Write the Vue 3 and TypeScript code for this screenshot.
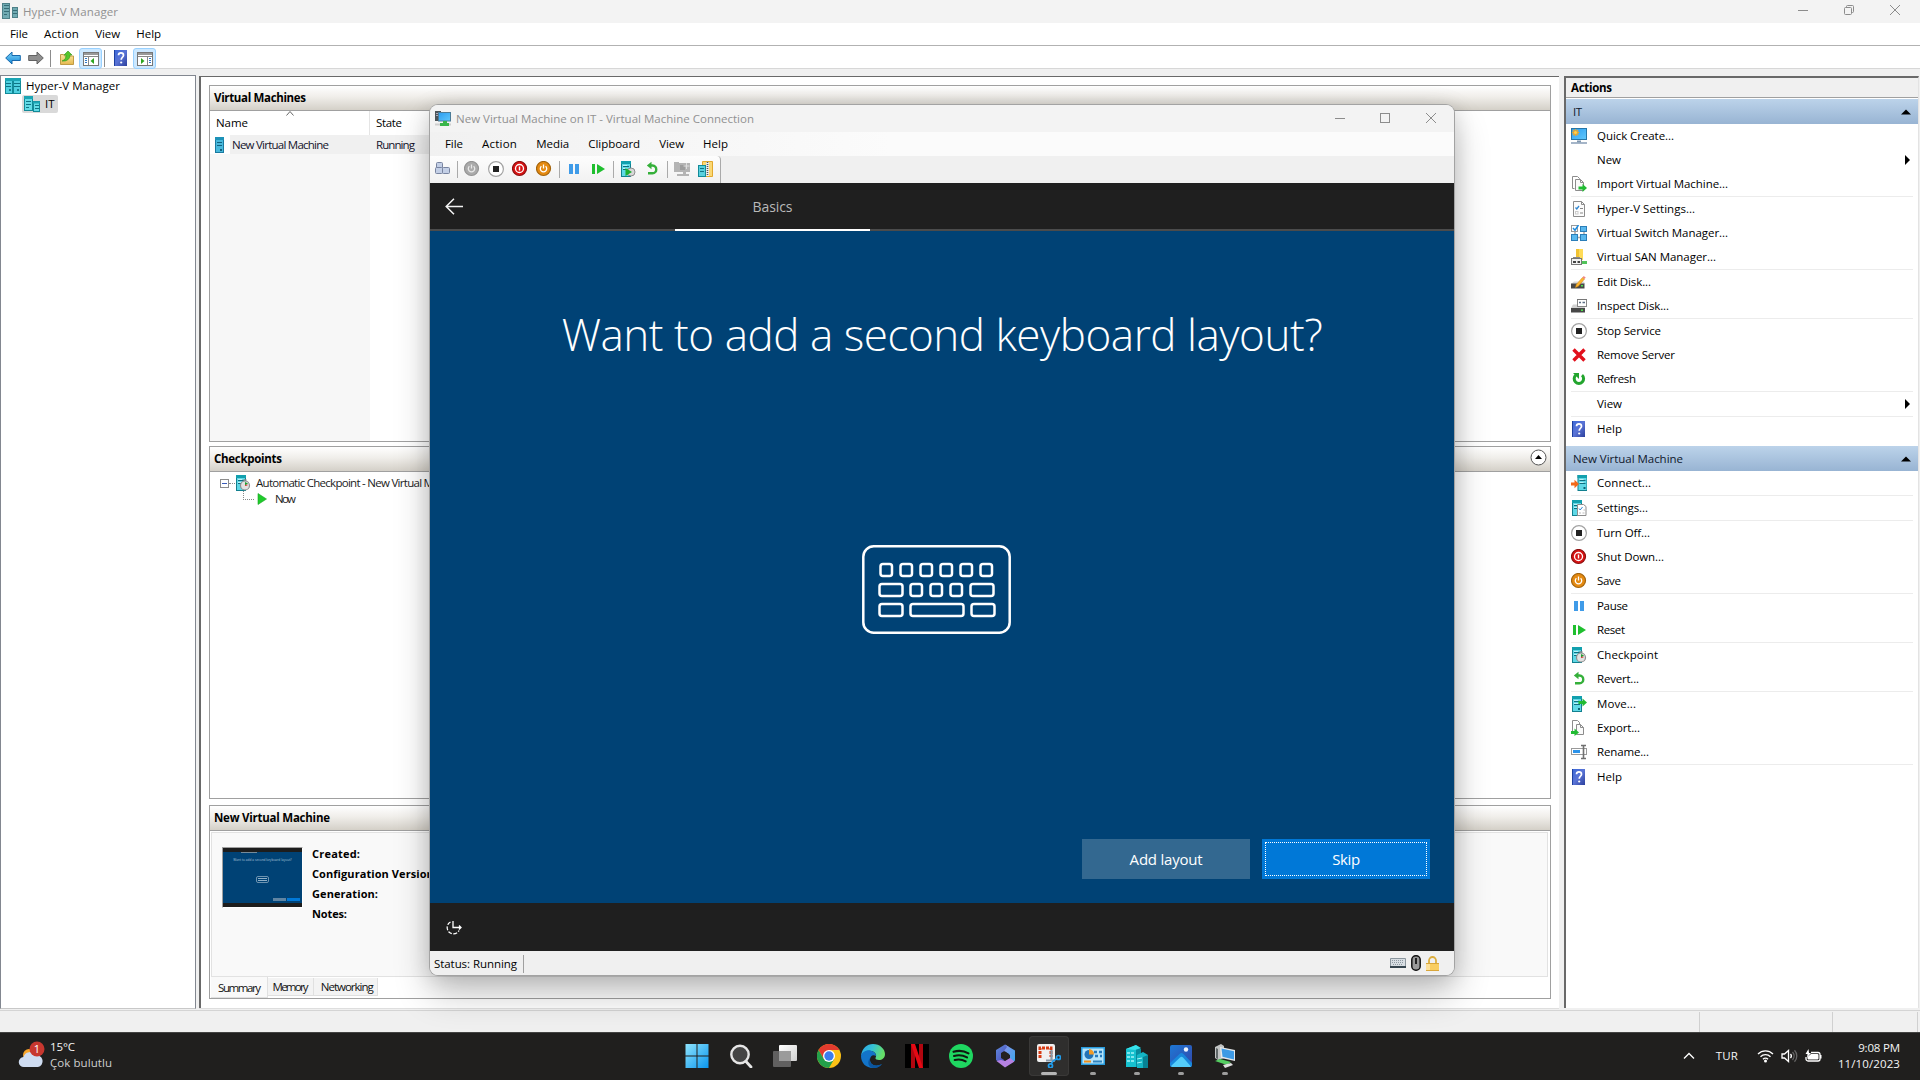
<script setup lang="ts">
import type { Directive } from 'vue'

// Tracks a label out (or in) until it occupies the given advance width in pixels.
const vFit: Directive<HTMLElement, number> = {
  mounted(el, { value }) {
    const count = (el.textContent ?? '').trim().length
    if (!value || count < 2) return
    const width = el.getBoundingClientRect().width
    el.style.letterSpacing = `${((value - width) / (count - 1)).toFixed(3)}px`
  },
}

type Label = [text: string, width: number]
interface Item { icon?: string; text: string; w: number; sub?: boolean }

const managerMenu: Label[] = [['File', 18], ['Action', 35], ['View', 25], ['Help', 25]]
const vmMenu: Label[] = [['File', 18], ['Action', 35], ['Media', 33], ['Clipboard', 52], ['View', 25], ['Help', 25]]

const hostActions: Item[][] = [
  [
    { icon: 'quick', text: 'Quick Create...', w: 77 },
    { text: 'New', w: 24, sub: true },
    { icon: 'import', text: 'Import Virtual Machine...', w: 131 },
  ],
  [
    { icon: 'hvset', text: 'Hyper-V Settings...', w: 98 },
    { icon: 'switch', text: 'Virtual Switch Manager...', w: 131 },
    { icon: 'san', text: 'Virtual SAN Manager...', w: 119 },
  ],
  [
    { icon: 'editdisk', text: 'Edit Disk...', w: 54 },
    { icon: 'inspect', text: 'Inspect Disk...', w: 72 },
  ],
  [
    { icon: 'stop', text: 'Stop Service', w: 64 },
    { icon: 'remove', text: 'Remove Server', w: 78 },
    { icon: 'refresh', text: 'Refresh', w: 39 },
  ],
  [{ text: 'View', w: 25, sub: true }],
  [{ icon: 'help', text: 'Help', w: 25 }],
]
const vmActions: Item[][] = [
  [{ icon: 'connect', text: 'Connect...', w: 54 }],
  [{ icon: 'settings', text: 'Settings...', w: 51 }],
  [
    { icon: 'stop', text: 'Turn Off...', w: 53 },
    { icon: 'shutdown', text: 'Shut Down...', w: 67 },
    { icon: 'save', text: 'Save', w: 24 },
  ],
  [
    { icon: 'pause', text: 'Pause', w: 31 },
    { icon: 'reset', text: 'Reset', w: 28 },
  ],
  [
    { icon: 'checkpoint', text: 'Checkpoint', w: 61 },
    { icon: 'revert', text: 'Revert...', w: 42 },
  ],
  [
    { icon: 'move', text: 'Move...', w: 39 },
    { icon: 'export', text: 'Export...', w: 43 },
    { icon: 'rename', text: 'Rename...', w: 52 },
  ],
  [{ icon: 'help', text: 'Help', w: 25 }],
]
const actionGroups = [
  { title: 'IT', w: 9, groups: hostActions },
  { title: 'New Virtual Machine', w: 110, groups: vmActions },
]

const details: Label[] = [['Created:', 48], ['Configuration Version:', 125], ['Generation:', 66], ['Notes:', 35]]

const vmTools = ['keys', '|', 'power', 'stop', 'shutdown', 'save', '|', 'pause', 'reset', '|', 'snapplay', 'revert', '|', 'enhanced', 'share']

const taskbarApps = [
  { id: 'start' }, { id: 'search' }, { id: 'taskview' }, { id: 'chrome' }, { id: 'edge' },
  { id: 'netflix' }, { id: 'spotify' }, { id: 'm365' }, { id: 'snip', run: true, active: true },
  { id: 'cpanel', run: true }, { id: 'hyperv', run: true }, { id: 'photos', run: true }, { id: 'vmconn', run: true },
]
</script>

<template>
  <svg class="defs" width="0" height="0">
    <defs>
      <linearGradient id="g-blue" x1="0" y1="0" x2="0" y2="1"><stop offset="0" stop-color="#7fd4f7" /><stop offset="1" stop-color="#1689d8" /></linearGradient>
      <linearGradient id="g-win" x1="0" y1="0" x2="1" y2="1"><stop offset="0" stop-color="#8ee3fd" /><stop offset="1" stop-color="#0a96ee" /></linearGradient>
      <linearGradient id="g-scr" x1="0" y1="0" x2="1" y2="1"><stop offset="0" stop-color="#2c9cf0" /><stop offset="1" stop-color="#60c8fb" /></linearGradient>
      <linearGradient id="g-help" x1="0" y1="0" x2="1" y2="1"><stop offset="0" stop-color="#3a68d8" /><stop offset=".5" stop-color="#5a74d6" /><stop offset="1" stop-color="#2c3f9c" /></linearGradient>
      <linearGradient id="g-edge" x1="0" y1="0" x2="1" y2=".3"><stop offset="0" stop-color="#2aa5e8" /><stop offset=".5" stop-color="#35c1d6" /><stop offset="1" stop-color="#66df68" /></linearGradient>
      <linearGradient id="g-m1" x1="0" y1="0" x2="1" y2="1"><stop offset="0" stop-color="#5f8dde" /><stop offset="1" stop-color="#4a3eb4" /></linearGradient>
      <linearGradient id="g-m2" x1="0" y1="0" x2="1" y2="1"><stop offset="0" stop-color="#8d93ea" /><stop offset="1" stop-color="#35a8ee" /></linearGradient>
      <linearGradient id="g-photo" x1="0" y1="0" x2="1" y2="1"><stop offset="0" stop-color="#1d78d6" /><stop offset="1" stop-color="#3446a8" /></linearGradient>
      <linearGradient id="g-tv" x1="0" y1="0" x2="1" y2="1"><stop offset="0" stop-color="#fff" /><stop offset="1" stop-color="#d0d0d0" /></linearGradient>
      <linearGradient id="g-folder" x1="0" y1="0" x2="0" y2="1"><stop offset="0" stop-color="#fbe6a0" /><stop offset="1" stop-color="#e5b84e" /></linearGradient>

      <symbol id="server" viewBox="0 0 16 16">
        <rect x="3.500" y=".5" width="9" height="15" fill="#5fd8e6" stroke="#12808f" />
        <rect x="3" y="0" width="10" height="3" fill="#12a0ae" />
        <path d="M5 5.500h6M5 8.500h6" stroke="#0d6e80" /><path d="M5 4.500h4M5 7.500h4" stroke="#b9f2f8" />
        <rect x="9" y="12" width="2" height="2" fill="#0a6474" />
      </symbol>
      <symbol id="vmrow" viewBox="0 0 16 16">
        <rect x=".5" y=".5" width="8" height="15" fill="#48b9dc" stroke="#1a7aa0" />
        <rect x="0" y="0" width="9" height="3" fill="#1d92b8" />
        <path d="M2 5.500h5M2 8.500h5" stroke="#13617f" /><rect x="5" y="12" width="2" height="2" fill="#13617f" />
      </symbol>
      <symbol id="servers" viewBox="0 0 16 16">
        <rect x=".5" y=".5" width="7" height="15" fill="#4fd0e0" stroke="#128a98" /><rect x="8.500" y=".5" width="7" height="15" fill="#4fd0e0" stroke="#128a98" />
        <path d="M0 1.500h16" stroke="#1ba5b4" stroke-width="3" />
        <path d="M1 5.500h5M1 8.500h5M9 5.500h6M9 8.500h6" stroke="#0f7485" /><path d="M5 11v2M13 11v2" stroke="#0a6474" stroke-width="1.500" />
      </symbol>
      <symbol id="host" viewBox="0 0 16 16">
        <rect x=".5" y=".5" width="8" height="14" fill="#62dbe6" stroke="#128a98" /><path d="M0 1.500h9" stroke="#1ba5b4" stroke-width="3" />
        <path d="M2 5.500h5M2 8.500h5M2 11.500h3" stroke="#0f7485" />
        <rect x="9.500" y="5.500" width="6" height="10" fill="#62dbe6" stroke="#128a98" /><path d="M9 6.500h7" stroke="#1ba5b4" stroke-width="2" /><path d="M11 9.500h4M11 12.500h4" stroke="#0f7485" />
      </symbol>
      <symbol id="apptitle" viewBox="0 0 16 16">
        <rect x=".5" y=".5" width="7" height="15" fill="#70aab2" stroke="#4d8088" /><path d="M2 2.500h5M2 5.500h5M2 8.500h5M2 11.500h3" stroke="#366c76" />
        <rect x="10.500" y="4.500" width="5" height="10" fill="#70aab2" stroke="#4d8088" /><path d="M11 7.500h4M11 10.500h4" stroke="#366c76" />
      </symbol>
      <symbol id="back" viewBox="0 0 16 14"><path d="M.7 7 7 1v3.500h8.300v5H7V13Z" fill="url(#g-blue)" stroke="#1668ac" /></symbol>
      <symbol id="fwd" viewBox="0 0 16 14"><path d="M15.300 7 9 1v3.500H.7v5H9V13Z" fill="#8f8f8f" stroke="#626262" /></symbol>
      <symbol id="folder" viewBox="0 0 16 16">
        <path d="M1.500 14.500v-10h3l1 1.500h9v8.500Z" fill="url(#g-folder)" stroke="#c19b45" />
        <path d="M3 11c3-1 4-3 4-6H5l4-4 4 4h-2c0 4-3 6.500-8 6Z" fill="#55c62c" stroke="#2f9416" stroke-width=".6" />
      </symbol>
      <symbol id="panel-l" viewBox="0 0 16 14">
        <rect x=".5" y=".5" width="15" height="13" fill="#fff" stroke="#777" /><path d="M1 2h14" stroke="#999" stroke-width="2" /><path d="M1 4.500h14M5.500 5v8" stroke="#888" />
        <path d="M2 6.500h2M2 8.500h2M2 10.500h2" stroke="#2f77c8" /><path d="M11 6v6L7.500 9Z" fill="#2ca51f" />
      </symbol>
      <symbol id="panel-r" viewBox="0 0 16 14">
        <rect x=".5" y=".5" width="15" height="13" fill="#fff" stroke="#777" /><path d="M1 2h14" stroke="#999" stroke-width="2" /><path d="M1 4.500h14M10.500 5v8" stroke="#888" />
        <path d="M12 6.500h2M12 8.500h2M12 10.500h2" stroke="#2f77c8" /><path d="M4 6v6l3.500-3Z" fill="#2ca51f" />
      </symbol>
      <symbol id="help" viewBox="0 0 16 16">
        <rect x="1" y="0" width="13" height="16" fill="url(#g-help)" /><path d="M1.500 0v16" stroke="#1d3fa0" />
        <path d="M5.500 5.200c0-3.200 5-3.200 5 0 0 2-2.300 2.200-2.300 4.600" fill="none" stroke="#fff" stroke-width="1.700" /><circle cx="8.200" cy="12.500" r="1.100" fill="#fff" />
      </symbol>
      <symbol id="quick" viewBox="0 0 16 16">
        <rect x=".5" y=".5" width="15" height="11" fill="url(#g-scr)" stroke="#2676a8" /><path d="M6 13.500h4" stroke="#7f96ae" stroke-width="2" /><path d="M0 15h16" stroke="#8fa3bb" stroke-width="1.600" />
        <path d="M4.500 1v7M1 4.500h7M2 2l5 5M7 2 2 7" stroke="#f5a623" stroke-width="1.300" /><circle cx="4.500" cy="4.500" r="1.500" fill="#ffd34d" />
      </symbol>
      <symbol id="import" viewBox="0 0 16 16">
        <path d="M3.500 12.500h-2v-12h5l2 2v2" fill="#fff" stroke="#8c8c8c" /><path d="M4.500 14.500v-11h5l3 3v8Z" fill="#fafafa" stroke="#8c8c8c" /><path d="M9.500 3.500v3h3" fill="none" stroke="#8c8c8c" />
        <path d="M7.500 10.500h4v-2.500l4.500 4-4.500 4v-2.500h-4Z" fill="#22bb33" />
      </symbol>
      <symbol id="export" viewBox="0 0 16 16">
        <path d="M3.500 11.500h-2v-11h5l2 2v2" fill="#fff" stroke="#8c8c8c" /><path d="M5.500 14.500v-10h4l3 3v7Z" fill="#fafafa" stroke="#8c8c8c" /><path d="M9.500 4.500v3h3" fill="none" stroke="#8c8c8c" />
        <path d="M0 11h3.500V8.500l4.500 4-4.500 3.500V14H0Z" fill="#22bb33" />
      </symbol>
      <symbol id="hvset" viewBox="0 0 16 16">
        <path d="M2.500.5h8l3 3v12h-11Z" fill="#fcfcfc" stroke="#8c8c8c" /><path d="M10.500.5v3h3" fill="none" stroke="#8c8c8c" />
        <path d="m4.500 6.500 1.300 1.500L8 5" fill="none" stroke="#2f86d2" stroke-width="1.300" /><path d="M9 7.500h3M9 12h3" stroke="#888" /><rect x="4.500" y="10.500" width="2.500" height="2.500" fill="none" stroke="#ccc" />
      </symbol>
      <symbol id="switch" viewBox="0 0 16 16">
        <path d="M4 7v3M13 6v4M6 12.500h4" stroke="#a8a8a8" stroke-width="1.500" />
        <g fill="#59b8ee" stroke="#2b7eb8"><rect x="9.500" y="1.500" width="6" height="5" /><rect x=".5" y="9.500" width="6" height="6" /><rect x="9.500" y="9.500" width="6" height="6" /></g>
        <rect x=".5" y=".5" width="6" height="6" fill="#fff" stroke="#999" /><path d="m2 3 2 2.200L7.500 0" fill="none" stroke="#1d8be0" stroke-width="1.500" />
      </symbol>
      <symbol id="san" viewBox="0 0 16 16">
        <path d="M5 0h7v11H5Z" fill="#ffdb57" /><path d="M5 0h3v11H5Z" fill="#f1c232" /><path d="M10 12h6v3h-6Z" fill="#51c35a" />
        <rect x=".5" y="9.500" width="10" height="6" fill="#f1f1f1" stroke="#777" /><path d="M2 12h3v2H2ZM6.500 12h2.500v2H6.500Z" fill="#444" /><path d="M2 8.500h7" stroke="#888" />
      </symbol>
      <symbol id="editdisk" viewBox="0 0 16 16">
        <path d="m0 10 3-2.500h10l1 2.500Z" fill="#d8d8d8" /><rect x="0" y="9.500" width="13.500" height="5" fill="#484848" /><rect x="10" y="11" width="2" height="1.500" fill="#4fe04f" />
        <path d="m4.500 13.500.8-3 6.200-7 2 1.500-6.200 7.300Z" fill="#ffb52e" stroke="#c98413" stroke-width=".5" /><path d="m11.500 3.500 1.200-1.500 2 1.600-1.200 1.500Z" fill="#ef8787" />
      </symbol>
      <symbol id="inspect" viewBox="0 0 16 16">
        <path d="m0 10 2-3.500h11l1 3.500Z" fill="#d2d2d2" /><rect x="0" y="10" width="14" height="4.500" fill="#484848" /><rect x="10" y="11.500" width="2" height="1.500" fill="#4fe04f" />
        <rect x="6.500" y="1.500" width="9" height="7" fill="#fff" stroke="#888" /><path d="M6 1.500h10" stroke="#777" /><path d="M8 4.500h2M11.500 4.500h2.500" stroke="#5d6f85" stroke-width="1.500" />
      </symbol>
      <symbol id="stop" viewBox="0 0 16 16"><circle cx="8" cy="8" r="7.400" fill="#fff" stroke="#a3a3a3" stroke-width="1.200" /><rect x="5" y="5" width="6" height="6" fill="#222" /></symbol>
      <symbol id="remove" viewBox="0 0 16 16"><path d="m2.500 2.500 11 11m0-11-11 11" stroke="#e2101c" stroke-width="3.400" /></symbol>
      <symbol id="refresh" viewBox="0 0 16 16"><path d="M11 4.200a4.700 4.700 0 1 1-6.200 0" fill="none" stroke="#23a52e" stroke-width="3" /><path d="M2 2h6v6Z" fill="#23a52e" /></symbol>
      <symbol id="connect" viewBox="0 0 16 16"><use href="#server" x="3.500" width="16" height="16" /><path d="M0 7.500h3.500V4.800L8 9l-4.500 4.200v-2.700H0Z" fill="#f36a1a" /></symbol>
      <symbol id="settings" viewBox="0 0 16 16"><use href="#server" x="-2" width="16" height="16" /><path d="M6.500 4.500h6l2.500 2v9H6.500Z" fill="#fff" stroke="#8c8c8c" /><path d="m8 8.500 1.200 1.500L11.500 7" fill="none" stroke="#2f86d2" /><path d="M8 13h2m1.500 0h2m-1-3h1.500" stroke="#bbb" /></symbol>
      <symbol id="shutdown" viewBox="0 0 16 16"><circle cx="7.500" cy="7.500" r="7" fill="#d81313" stroke="#8d0f0f" stroke-width="1.200" /><circle cx="7.500" cy="7.500" r="4" fill="none" stroke="#fff" stroke-width="1.300" /><path d="M7.500 5.500v4" stroke="#fff" stroke-width="1.400" /></symbol>
      <symbol id="save" viewBox="0 0 16 16"><circle cx="7.500" cy="7.500" r="7" fill="#e58a11" stroke="#a3640e" stroke-width="1.200" /><path d="M5.400 5.300a3.200 3.200 0 1 0 4.200 0M7.500 3.500v4" fill="none" stroke="#fff" stroke-width="1.300" /></symbol>
      <symbol id="power" viewBox="0 0 16 16"><circle cx="7.500" cy="7.500" r="7" fill="#aaa" stroke="#949494" stroke-width="1.200" /><path d="M5.400 5.300a3.200 3.200 0 1 0 4.200 0M7.500 3.500v4" fill="none" stroke="#e8e8e8" stroke-width="1.300" /></symbol>
      <symbol id="pause" viewBox="0 0 16 16"><path d="M3 3h4v10H3zM9 3h4v10H9z" fill="#3f9be8" /></symbol>
      <symbol id="reset" viewBox="0 0 16 16"><path d="M2 3h3v10H2zM7 3v10l8-5z" fill="#1fbf2f" /></symbol>
      <symbol id="checkpoint" viewBox="0 0 16 16"><use href="#server" x="-2" width="16" height="16" /><circle cx="10" cy="10.500" r="4.500" fill="#e2e2e2" stroke="#8e8e8e" stroke-width="1.200" /><path d="M10 10.500V7l3 1.500Z" fill="#20a030" /><path d="m10 10.500 2.500-.5" stroke="#d33" /><path d="M8.500 5h3" stroke="#888" stroke-width="1.500" /></symbol>
      <symbol id="snapplay" viewBox="0 0 16 16"><use href="#server" x="-2" width="16" height="16" /><circle cx="11" cy="11" r="4" fill="#d8d8d8" stroke="#8e8e8e" /><path d="M5.500 7v8l6.500-4Z" fill="#1faf2f" /></symbol>
      <symbol id="revert" viewBox="0 0 16 16"><path d="M6 4.500h2.500c5 0 5 7.800 0 7.800H4" fill="none" stroke="#35b03a" stroke-width="2.400" /><path d="M2.800 4.500 7.500.8v7.400Z" fill="#35b03a" /></symbol>
      <symbol id="move" viewBox="0 0 16 16"><use href="#server" x="-2" width="16" height="16" /><path d="M7.500 5h4V2.500L16 6.500l-4.500 4V8h-4Z" fill="#22bb33" /></symbol>
      <symbol id="rename" viewBox="0 0 16 16"><rect x=".5" y="4.500" width="15" height="6" fill="#fff" stroke="#999" /><rect x="2" y="6" width="7" height="3" fill="#2b93ea" /><path d="M12.500 1v14M10 1.500h5M10 14.500h5" stroke="#707070" stroke-width="1.600" /></symbol>
      <symbol id="play" viewBox="0 0 16 16"><path d="M4 2.500v11l8.500-5.500Z" fill="#1fcb2b" stroke="#17a522" stroke-width=".6" /></symbol>
      <symbol id="keys" viewBox="0 0 16 16"><g fill="#c3cfe6" stroke="#7884a0"><rect x="1.500" y="1.500" width="6" height="6" rx="1" /><rect x=".5" y="6.500" width="7" height="6" rx="1" /><rect x="7.500" y="6.500" width="7" height="6" rx="1" /></g></symbol>
      <symbol id="enhanced" viewBox="0 0 16 16"><path d="M0 1h5v10H0zM4 2h12v9H4zM9 11h3v3H9zM3 13h12v2H3z" fill="#b4b4b4" /><path d="M6 4h5v5H6z" fill="#9d9d9d" /><path d="M12.500 2v6M9.500 5h6" stroke="#ddd" /></symbol>
      <symbol id="share" viewBox="0 0 16 16"><path d="M4.500.5h10v15h-10Z" fill="#fbd873" stroke="#e2a92f" /><path d="M9.500 1v14" stroke="#eee" stroke-width="3" /><path d="M9.500 1v14" stroke="#555" stroke-width="1.600" stroke-dasharray="1 1" /><rect x=".5" y="4.500" width="7" height="11" fill="#58d0de" stroke="#128a98" /><path d="M2 7.500h4M2 10.500h4" stroke="#0f7485" /></symbol>
      <symbol id="vmtitle" viewBox="0 0 16 16"><path d="M0 0h6v10H0z" fill="#4c5358" /><path d="M1 2.500h3M1 4.500h3" stroke="#aab" /><rect x="3.500" y="1.500" width="12" height="8.500" fill="url(#g-scr)" stroke="#4c7b96" /><path d="M8 10h4v3H8z" fill="#39b54a" /><path d="M5 13.500h9" stroke="#39b54a" stroke-width="3" /><path d="M0 13.500h5M14 13.500h2" stroke="#cfcfcf" stroke-width="2" /></symbol>

      <symbol id="start" viewBox="0 0 24 24"><path d="M.5 0h11v11.500H.5zM12.500 0h11v11.500h-11zM.5 12.500h11V24H.5zM12.500 12.500h11V24h-11z" fill="url(#g-win)" /></symbol>
      <symbol id="search" viewBox="0 0 24 24"><circle cx="11" cy="10.500" r="8.700" fill="#454545" stroke="#e6e6e6" stroke-width="2.400" /><path d="m17 17.500 5 5.500" stroke="#e6e6e6" stroke-width="2.800" stroke-linecap="round" /></symbol>
      <symbol id="taskview" viewBox="0 0 24 24"><rect x="6" y="1" width="18" height="16" rx="1" fill="url(#g-tv)" /><rect x="0" y="7" width="18" height="16" rx="1" fill="#6a6a6a" fill-opacity=".88" /><rect x="6" y="7" width="12" height="10" fill="#9b9b9b" /></symbol>
      <symbol id="chrome" viewBox="0 0 24 24"><circle cx="12" cy="12" r="12" fill="#fbc116" /><path d="M12 6h10.400A12 12 0 0 0 1.600 6l5.200 9Z" fill="#e33b2e" /><path d="M1.600 6A12 12 0 0 0 12 24l5.200-9H6.800Z" fill="#23a04a" /><circle cx="12" cy="12" r="6" fill="#fff" /><circle cx="12" cy="12" r="4.700" fill="#3b7ded" /></symbol>
      <symbol id="edge" viewBox="0 0 24 24"><path d="M0 12C1 4 6 0 12 0c7 0 12 5 12 10 0 4-3 6-6 6-2 0-4-1-3.500-2C17 10 12 6 7 7c-4 .7-6 3-7 5Z" fill="url(#g-edge)" /><path d="M0 12c1-4 6-7 11-5 3 1 4 3 4 5-3-2-6 0-6 4s5 8 12 4c-3 3-6 4-9 4C5 24 0 19 0 12Z" fill="#1374c9" /><path d="M9 14c-1 5 3 10 12 6-3 4-7 4-9 4-5-1-6-6-3-10Z" fill="#0b559f" /></symbol>
      <symbol id="netflix" viewBox="0 0 24 24"><path d="M0 0h24v24H0z" fill="#000" /><path d="M6 0h4v24H6zM14 0h4v24h-4z" fill="#b1060f" /><path d="M6 0h4l8 24h-4Z" fill="#e50914" /></symbol>
      <symbol id="spotify" viewBox="0 0 24 24"><circle cx="12" cy="12" r="12" fill="#1fd761" /><path d="M4.500 7.800c5-1.500 10.500-1 15 1.500M5 12c4.500-1.300 9-.8 13 1.400M5.700 16c4-1 7.500-.6 11 1.300" fill="none" stroke="#101810" stroke-width="2.100" stroke-linecap="round" /></symbol>
      <symbol id="m365" viewBox="0 0 24 24"><path d="M12 .5 3 6v10l4 3 5-3-4-3V9l5-3 3-3Z" fill="url(#g-m1)" /><path d="m12 .5 10 6v10l-5 3.500V11L11 7l3-4Z" fill="url(#g-m2)" /><path d="m3.500 17 8.500 6.500 9.500-6L17 14l-5 3-4-1Z" fill="#b681e2" /><path d="m12 7.500 4 2.500v4l-4 2.500L8 14v-4Z" fill="#242121" /></symbol>
      <symbol id="snip" viewBox="0 0 24 24"><rect x="0" y="0" width="18" height="18" rx="2" fill="#f0f0f0" /><path d="M3 14V4h11v9" fill="none" stroke="#d83b13" stroke-width="3" stroke-dasharray="3 1" /><path d="M14.500 6v11M9 16.500h9" stroke="#8899a8" stroke-width="2.200" /><g fill="none" stroke="#1f9bea" stroke-width="1.700"><circle cx="21.500" cy="13.500" r="2" /><circle cx="13.500" cy="21.800" r="2" /><path d="m14 20 2-3 4-2.500" /></g></symbol>
      <symbol id="cpanel" viewBox="0 0 24 24"><rect x="0" y="3" width="24" height="18" fill="#299bdc" /><rect x="1.500" y="4.500" width="21" height="15" fill="#b6e4fa" /><circle cx="8" cy="10.500" r="4.500" fill="#2374b6" /><path d="M8 10.500V5a5 5 0 0 1 5 5.500Z" fill="#f09a27" /><path d="M13 8h3m2 0h3m-7 4h3m2 0h2" stroke="#2579bd" stroke-width="2.400" /><path d="M3 17.500h7" stroke="#ef8f1b" stroke-width="2" /><path d="M12 17.500h9" stroke="#2f83be" stroke-width="2" /></symbol>
      <symbol id="hyperv" viewBox="0 0 24 24"><path d="m1 5 10-4v22H1Z" fill="#16c1cf" /><path d="m11 1 5 4v18h-5Z" fill="#078b9d" /><path d="M1 5 11 1l5 3-6 2Z" fill="#36e2ec" /><path d="M2 9h8M2 13h8M2 17h8" stroke="#a2f4f8" stroke-width="1.700" stroke-dasharray="3 1" /><path d="m12 11 6-3 5 3v13H12Z" fill="#14b6c5" /><path d="M18 13v11h5V11Z" fill="#078294" /><path d="m12 15 5-1m-5 5 5-1" stroke="#a2f4f8" /></symbol>
      <symbol id="photos" viewBox="0 0 24 24"><rect x="1" y="1" width="22" height="22" rx="2" fill="url(#g-photo)" /><path d="m1 19 9.500-9c1.300-1.300 2.700-1.300 4 0L23 19v2a2 2 0 0 1-2 2H3a2 2 0 0 1-2-2Z" fill="#1787dc" /><path d="M2 22 11 13.500c1-1 2-1 3 0L22 22.500l-1 .5H3Z" fill="#54cdfa" /><circle cx="17" cy="5.500" r="2.200" fill="#eef5fd" /></symbol>
      <symbol id="vmconn" viewBox="0 0 24 24"><path d="m2 3 6-3 3 2v12l-6 2-3-2Z" fill="#c2c4c4" /><path d="M3 4v10l2 1V5Z" fill="#616869" /><path d="M7 3 22 6v11L8 14Z" fill="#e4e8ea" /><path d="M8.500 4.500 21 7.200v8.200L9.500 12.800Z" fill="#3d9ae5" /><path d="m2 17 5-2 11 3-4 3Z" fill="#54cd61" /><path d="m10 21 8-2 2 2-8 3Z" fill="#dedede" /></symbol>
    </defs>
  </svg>

  <div class="desktop">
    <!-- Hyper-V Manager -->
    <section class="manager">
      <header class="titlebar">
        <svg class="i16"><use href="#apptitle" /></svg>
        <span v-fit="95">Hyper-V Manager</span>
        <div class="caption">
          <svg viewBox="0 0 12 12"><path d="M1 6.500h10" /></svg>
          <svg viewBox="0 0 12 12"><rect x="1.500" y="3.500" width="7" height="7" rx="1" /><path d="M3.500 3V2.500a1 1 0 0 1 1-1h5a1 1 0 0 1 1 1v5a1 1 0 0 1-1 1H9" /></svg>
          <svg viewBox="0 0 12 12"><path d="m1 1 10 10M11 1 1 11" /></svg>
        </div>
      </header>
      <nav class="menubar"><span v-for="[t, w] in managerMenu" :key="t" v-fit="w">{{ t }}</span></nav>
      <div class="toolbar">
        <svg class="arrow"><use href="#back" /></svg>
        <svg class="arrow"><use href="#fwd" /></svg>
        <i class="sep" />
        <svg class="i16"><use href="#folder" /></svg>
        <b class="toggle"><svg class="arrow"><use href="#panel-l" /></svg></b>
        <i class="sep second" />
        <svg class="i16"><use href="#help" /></svg>
        <b class="toggle last"><svg class="arrow"><use href="#panel-r" /></svg></b>
      </div>

      <div class="body">
        <aside class="tree">
          <div class="node"><svg class="i16"><use href="#servers" /></svg><span v-fit="94">Hyper-V Manager</span></div>
          <div class="node child"><svg class="i16"><use href="#host" /></svg><span>IT</span></div>
        </aside>

        <main class="center">
          <section class="panel machines">
            <h2><span v-fit="92">Virtual Machines</span></h2>
            <div class="thead">
              <div class="c-name"><span v-fit="32">Name</span><svg viewBox="0 0 8 5"><path d="m.5 4.500 3.500-4 3.500 4" /></svg></div>
              <div class="c-state"><span v-fit="26">State</span></div>
            </div>
            <div class="trow">
              <div class="c-name"><svg class="i16"><use href="#vmrow" /></svg><span v-fit="97">New Virtual Machine</span></div>
              <div class="c-state"><span v-fit="39">Running</span></div>
            </div>
            <div class="fill" />
          </section>

          <section class="panel checkpoints">
            <h2><span v-fit="68">Checkpoints</span><svg class="collapse" viewBox="0 0 17 17"><circle cx="8.500" cy="8.500" r="7.500" /><path d="m5 10 3.500-4 3.500 4Z" /></svg></h2>
            <div class="cp">
              <svg class="exp" viewBox="0 0 9 9"><rect x=".5" y=".5" width="8" height="8" /><path d="M2 4.500h5" /></svg>
              <i class="dots" />
              <svg class="i16"><use href="#checkpoint" /></svg>
              <span v-fit="209">Automatic Checkpoint - New Virtual Machine</span>
            </div>
            <div class="cp now"><i class="elbow" /><svg class="i16"><use href="#play" /></svg><span v-fit="21">Now</span></div>
          </section>

          <section class="panel info">
            <h2><span v-fit="116">New Virtual Machine</span></h2>
            <div class="summary">
              <div class="thumb">
                <i class="bar"><u /></i>
                <em>Want to add a second keyboard layout?</em>
                <i class="kb"><u /><u /></i>
                <div class="tb"><i /><i /></div>
                <i class="bar" />
              </div>
              <dl><dt v-for="[t, w] in details" :key="t"><span v-fit="w">{{ t }}</span></dt></dl>
            </div>
            <div class="tabs"><span class="on"><s v-fit="43">Summary</s></span><span><s v-fit="36">Memory</s></span><span><s v-fit="53">Networking</s></span></div>
          </section>
        </main>

        <aside class="actions">
          <h2><span v-fit="41">Actions</span></h2>
          <div v-for="g in actionGroups" :key="g.title" class="agroup">
            <h3><span v-fit="g.w">{{ g.title }}</span><svg width="10" height="6"><path d="M0 5.500 5 .5l5 5Z" /></svg></h3>
            <ul v-for="(items, n) in g.groups" :key="n">
              <li v-for="it in items" :key="it.text">
                <svg class="i16"><use v-if="it.icon" :href="'#' + it.icon" /></svg>
                <span v-fit="it.w">{{ it.text }}</span>
                <svg v-if="it.sub" class="more" width="5" height="10"><path d="M0 0v10l5-5Z" /></svg>
              </li>
            </ul>
          </div>
        </aside>
      </div>
      <footer class="statusbar"><i /><i /><i /></footer>
    </section>

    <!-- Virtual Machine Connection -->
    <section class="vm">
      <header class="vm-title">
        <svg class="i16"><use href="#vmtitle" /></svg>
        <span v-fit="298">New Virtual Machine on IT - Virtual Machine Connection</span>
        <div class="caption">
          <svg class="min" viewBox="0 0 12 12"><path d="M1 6.500h10" /></svg>
          <svg viewBox="0 0 12 12"><rect x="1.500" y="1.500" width="9" height="9" /></svg>
          <svg viewBox="0 0 12 12"><path d="m1 1 10 10M11 1 1 11" /></svg>
        </div>
      </header>
      <nav class="menubar vm-menu"><span v-for="[t, w] in vmMenu" :key="t" v-fit="w">{{ t }}</span></nav>
      <div class="vm-tools">
        <div class="strip">
          <template v-for="(t, n) in vmTools" :key="n"><i v-if="t === '|'" :class="{ first: n === 1 }" /><svg v-else class="i16"><use :href="'#' + t" /></svg></template>
        </div>
      </div>
      <div class="oobe-top">
        <svg width="18" height="17" viewBox="0 0 18 17"><path d="M9 .7 1.200 8.500 9 16.300M1.200 8.500H18" /></svg>
        <div class="step"><span v-fit="40">Basics</span></div>
      </div>
      <div class="oobe">
        <h1><span v-fit="761">Want to add a second keyboard layout?</span></h1>
        <svg class="keyboard" width="150" height="90" viewBox="0 0 150 90">
          <rect x="1.300" y="1.300" width="146.400" height="86.400" rx="10.500" />
          <rect v-for="k in 6" :key="'a' + k" :x="-1.500 + k * 20" y="19" width="11.500" height="12" rx="2.500" />
          <rect x="17.500" y="39" width="23" height="12" rx="2.500" /><rect v-for="k in 3" :key="'b' + k" :x="28.500 + k * 20" y="39" width="11.500" height="12" rx="2.500" /><rect x="108.500" y="39" width="23" height="12" rx="2.500" />
          <rect x="17.500" y="59" width="23" height="12" rx="2.500" /><rect x="48.500" y="59" width="53" height="12" rx="2.500" /><rect x="109.500" y="59" width="23" height="12" rx="2.500" />
        </svg>
        <div class="buttons">
          <button><span v-fit="73">Add layout</span></button>
          <button class="primary"><span v-fit="28">Skip</span></button>
        </div>
      </div>
      <div class="oobe-foot">
        <svg width="17" height="16" viewBox="0 0 17 16"><path d="M8 1v6.500h8M14 5.500l2 2-2 2" /><path d="M5.500 2A6.300 6.300 0 1 0 14 10.500" stroke-dasharray="4 1.500" /></svg>
      </div>
      <footer class="vm-status">
        <span v-fit="83">Status: Running</span><i />
        <div class="st-icons">
          <svg width="16" height="10"><path d="M.5.500h15v9H.5Z" fill="#d8dee3" stroke="#8b969e" /><path d="M2 2.500h12M2 4.500h12M3 6.500h10" stroke="#8f9aa3" stroke-dasharray="1 1" /><path d="M0 9h16" stroke="#36454f" stroke-width="2" /></svg>
          <svg width="10" height="16"><rect x=".8" y=".8" width="8.400" height="14.400" rx="4" fill="#999" stroke="#111" stroke-width="1.500" /><path d="M5 3v6" stroke="#222" stroke-width="2" /></svg>
          <svg width="13" height="15"><path d="M3 8V4.500a3.500 3.500 0 0 1 7 0V8" fill="none" stroke="#dcae3e" stroke-width="1.800" /><rect x="0" y="7" width="13" height="8" fill="#f9cd60" /><path d="M0 7h4v8H0z" fill="#fce09a" /><path d="M0 14.500h13M0 7.500h13" stroke="#d9a63a" /></svg>
        </div>
      </footer>
    </section>

    <!-- Taskbar -->
    <footer class="taskbar">
      <div class="weather">
        <svg width="28" height="28" viewBox="0 0 28 28"><circle cx="12" cy="14" r="6" fill="#f7a52b" /><path d="M7 26a5 5 0 0 1-.5-10 6.500 6.500 0 0 1 12-1.500A5.500 5.500 0 0 1 21 26Z" fill="#cfdcf1" /><circle cx="20" cy="8" r="7.500" fill="#c7372f" /><text x="20" y="12" text-anchor="middle">1</text></svg>
        <div><span v-fit="25">15°C</span><span v-fit="62" class="dim">Çok bulutlu</span></div>
      </div>
      <div class="apps">
        <div v-for="a in taskbarApps" :key="a.id" class="app" :class="{ run: a.run, active: a.active }"><svg width="24" height="24"><use :href="'#' + a.id" /></svg></div>
      </div>
      <div class="tray">
        <svg class="chev" width="12" height="8" viewBox="0 0 12 8"><path d="m1 6.500 5-5 5 5" /></svg>
        <span v-fit="22" class="lang">TUR</span>
        <svg class="wifi" width="17" height="14" viewBox="0 0 17 14"><path d="M1 5a10.500 10.500 0 0 1 15 0M3.500 7.700a7 7 0 0 1 10 0M6 10.200a3.500 3.500 0 0 1 5 0" /><circle cx="8.500" cy="12" r="1.500" /></svg>
        <svg class="spk" width="17" height="14" viewBox="0 0 17 14"><path d="M1 5h2.500L7.500 1.500v11L3.500 9H1Z" /><path d="M9.500 5a3 3 0 0 1 0 4" /><path class="off" d="M11.500 3a6 6 0 0 1 0 8M13.500 1.200a8.500 8.500 0 0 1 0 11.600" /></svg>
        <svg class="bat" width="17" height="14" viewBox="0 0 17 14"><path d="M6 3.500h7a2 2 0 0 1 2 2v4.500a2 2 0 0 1-2 2H3a2 2 0 0 1-2-2V8" /><path class="solid" d="M6 5h6.500a1 1 0 0 1 1 1v3.500a1 1 0 0 1-1 1h-9a1 1 0 0 1-1-1V8ZM15 6h1.500v3.500H15ZM3.500 0 .5 5h2L2 8.500 6 4H4Z" /></svg>
        <div class="clock"><span v-fit="42">9:08 PM</span><span v-fit="62">11/10/2023</span></div>
      </div>
    </footer>
  </div>
</template>

<style>
html, body { margin: 0; overflow: hidden; background: #f0f0f0; }
</style>

<style scoped>
* { box-sizing: border-box; }
.defs { position: absolute; }
.desktop { position: relative; width: 1920px; height: 1080px; overflow: hidden; font: 11.5px/16px "Open Sans", "Noto Sans", sans-serif; color: #000; }
.desktop svg { flex: none; display: block; }
span, s { display: inline-block; white-space: nowrap; text-decoration: none; flex: none; }
h1, h2, h3, ul, dl { margin: 0; padding: 0; font-size: inherit; }
.i16 { width: 16px; height: 16px; }

.manager { width: 1920px; height: 1032px; display: flex; flex-direction: column; background: #f0f0f0; }
.titlebar { height: 23px; display: flex; align-items: center; padding: 0 2px; background: #f3f3f3; color: #919191; flex: none; }
.titlebar > svg { margin-top: -1px; }
.titlebar > span { margin-left: 5px; }
.caption { margin-left: auto; display: flex; gap: 34px; }
.caption svg { width: 12px; height: 12px; fill: none; stroke: #8c8c8c; }
.titlebar .caption { margin-right: 17px; margin-top: -3px; }
.menubar { height: 23px; flex: none; display: flex; align-items: center; gap: 16px; padding-left: 10px; background: #fff; border-bottom: 1px solid #b2b2b2; }
.toolbar { height: 23px; flex: none; display: flex; align-items: center; padding: 2px 0 0 5px; background: #fff; border-bottom: 1px solid #d7d7d7; }
.arrow { width: 16px; height: 14px; }
.toolbar .arrow + .arrow { margin-left: 7px; }
.sep { width: 1px; height: 17px; background: #8c8c8c; margin: 0 8px 0 6px; }
.toggle { display: flex; align-items: center; justify-content: center; width: 23px; height: 21px; margin-left: 4px; background: #cce8ff; border: 1px solid #99d1ff; border-radius: 3px; padding-top: 2px; }
.sep.second { margin: 0 8px 0 2px; }
.toggle.last { margin-left: 4px; }

.body { flex: 1; display: flex; padding-top: 6px; min-height: 0; }
.tree { width: 196px; height: 934px; background: #fff; border: 1px solid #828790; border-bottom-color: #c8c8c8; padding: 1px 0 0 4px; }
.node { height: 18px; display: flex; align-items: center; }
.node span { margin-left: 5px; }
.node.child { margin: 0 0 0 17px; width: 36px; background: #d9d9d9; border-radius: 2px; padding-left: 2px; }

.center { width: 1360px; height: 932px; margin: 1px 0 0 3px; background: #fff; border: solid #696969; border-width: 1px 0 0 2px; box-shadow: 0 1px #dedede; padding: 8px 8px 0 8px; }
.panel { border: 1px solid #a0a0a0; background: #fff; display: flex; flex-direction: column; }
.panel h2 { height: 25px; flex: none; display: flex; align-items: center; padding: 0 5px 0 4px; background: linear-gradient(#fff, #f0eeea 45%, #d4d0c8); border-bottom: 1px solid #a0a0a0; font-weight: 700; }
.machines { height: 357px; }
.thead, .trow { display: flex; flex: none; height: 24px; align-items: stretch; }
.c-name { width: 160px; display: flex; align-items: center; position: relative; padding-left: 6px; border-right: 1px solid #e5e5e5; }
.c-name > svg:not(.i16) { position: absolute; left: 76px; top: 0; width: 8px; height: 5px; fill: none; stroke: #666; }
.c-state { display: flex; align-items: center; padding-left: 6px; flex: 1; }
.trow { height: 19px; background: linear-gradient(#f0f0f0, #f0f0f0) 20px 0 / 240px no-repeat; color: #14142c; }
.trow .c-name { padding-left: 5px; border: 0; }
.trow .c-name span { margin-left: 1px; }
.fill { flex: 1; width: 160px; background: #f7f7f7; }
.checkpoints { height: 353px; margin-top: 4px; }
.collapse { width: 17px; height: 17px; margin: -3px -2px 0 auto; fill: #fff; stroke: #555; }
.collapse path { fill: #000; stroke: none; }
.cp { height: 16px; margin-top: 3px; display: flex; align-items: center; padding-left: 10px; flex: none; overflow: hidden; color: #1c1c1c; }
.exp { width: 9px; height: 9px; fill: #fff; stroke: #8c8c8c; }
.exp path { stroke: #3a5bb8; }
.dots { width: 6px; height: 0; border-top: 1px dotted #888; }
.cp span { margin-left: 5px; }
.cp.now { margin-top: 0; padding-left: 33px; overflow: visible; }
.elbow { width: 11px; height: 9px; border: dotted #888; border-width: 0 0 1px 1px; margin-top: -8px; }
.info { height: 194px; margin-top: 6px; padding: 0; }
.summary { margin: 1px 2px 0 1px; height: 145px; background: #f9f9f9; border: 1px solid #e2e2e2; display: flex; padding: 14px 0 0 10px; flex: none; }
.thumb { width: 81px; height: 61px; background: #004275; border: 1px solid #a0a0a0; border-right-color: #fff; border-bottom-color: #fff; display: flex; flex-direction: column; align-items: center; overflow: hidden; font-size: 4px; line-height: 6px; color: #a6c1d6; }
.thumb .bar { width: 100%; height: 4px; background: #1d1d1d; flex: none; }
.thumb .bar u { display: block; width: 16px; height: 1px; margin: 4px 0 0 18px; background: #758b9b; }
.thumb em { font-style: normal; margin-top: 5px; white-space: nowrap; font-size: 3.200px; }
.kb { width: 13px; height: 7px; margin-top: 13px; border: 1px solid #6d93b0; border-radius: 2px; padding: 1px; display: flex; flex-direction: column; gap: 1px; }
.kb u { height: 1px; background: #8fb0c8; }
.tb { display: flex; gap: 1px; margin: auto 2px 2px auto; }
.tb i { width: 13px; height: 3px; background: #5f84a2; }
.tb i + i { background: #0078d7; }
dl { margin-left: 9px; margin-top: -3px; font-weight: 700; font-size: 11px; }
dt { height: 20px; line-height: 20px; }
.tabs { display: flex; align-items: flex-start; padding-left: 1px; height: 21px; color: #111; }
.tabs span { margin-top: 1px; height: 18px; padding: 0 6px 0 5px; border: 1px solid #e0e0e0; border-left: 0; border-top: 0; background: #f3f3f3; line-height: 17px; }
.tabs span.on { margin-top: 0; height: 21px; background: #f9f9f9; padding: 0 7px; line-height: 22px; }
.tabs span:last-child { padding: 0 4px 0 7px; }

.actions { width: 355px; height: 932px; margin: 1px 0 0 5px; background: #fff; border: solid #696969; border-width: 2px 0 0 2px; border-right: 1px solid #e3e3e3; }
.actions h2 { height: 20px; display: flex; align-items: center; padding-left: 5px; font-weight: 700; background: #f0f0f0; border-bottom: 1px solid #a0a0a0; margin-bottom: 1px; }
.agroup h3 { height: 25px; display: flex; align-items: center; justify-content: space-between; padding: 0 7px; font-weight: 400; color: #10182c; background: linear-gradient(#bcd3ea, #98b4d3); }
.agroup { margin-bottom: 5px; }
.agroup ul { list-style: none; margin: 0 5px; }
.agroup ul + ul { border-top: 1px solid #ececec; }
.agroup li { height: 24px; display: flex; align-items: center; }
.agroup li span { margin-left: 10px; }
.more { margin-left: auto; margin-right: 3px; }
.statusbar { height: 22px; flex: none; border-top: 1px solid #d4d4d4; display: flex; justify-content: flex-end; padding-right: 2px; }
.statusbar i { border-right: 1px solid #d0d0d0; height: 20px; margin-top: 1px; width: 133px; }
.statusbar i:last-child { width: 85px; }

.vm { position: absolute; left: 430px; top: 105px; width: 1024px; height: 870px; border-radius: 8px; background: #f0f0f0; box-shadow: 0 0 0 1px #a3a3a3, 0 18px 36px rgba(0, 0, 0, .24), 0 2px 22px rgba(0, 0, 0, .14); display: flex; flex-direction: column; overflow: hidden; }
.vm-title { height: 27px; flex: none; background: #f3f3f3; color: #919191; display: flex; align-items: center; padding: 1px 17px 0 5px; }
.vm-title span { margin-left: 5px; }
.vm-title .caption { margin-top: -2px; }
.vm-title .min { margin-right: -1px; }
.vm-menu { height: 24px; border: 0; gap: 19px; padding-left: 15px; background: linear-gradient(90deg, #f1f1f1, #fbfbfb 45%); }
.vm-tools { height: 27px; flex: none; }
.strip { width: 291px; height: 27px; background: linear-gradient(#fdfdfd, #f1f1f1); border-right: 1px solid #aaa; border-radius: 0 4px 0 0; display: flex; align-items: center; padding: 0 0 1px 5px; gap: 8px; }
.strip i { width: 1px; height: 17px; background: #aaa; margin: 0 -2px 0 -1px; }
.strip i.first { margin-left: -2px; }
.oobe-top { height: 48px; flex: none; background: #1f1f1f; display: flex; position: relative; box-shadow: inset 0 -2px #4b4b4b; align-items: center; padding-left: 15px; }
.oobe-top svg { fill: none; stroke: #f2f2f2; stroke-width: 1.500; margin-top: -1px; }
.step { width: 195px; height: 48px; margin-left: 212px; border-bottom: 2px solid #fff; display: flex; align-items: center; justify-content: center; padding-top: 2px; font-size: 14px; color: #b9b9b9; }
.oobe { flex: 1; background: #004275; display: flex; flex-direction: column; align-items: center; }
h1 { margin-top: 68px; height: 70px; line-height: 70px; font-size: 44px; font-weight: 300; color: #fff; }
.keyboard { margin: 176px 0 0 -10px; fill: none; stroke: #fff; stroke-width: 2.500; }
.buttons { display: flex; gap: 12px; margin: auto 24px 24px auto; }
button { width: 168px; height: 40px; border: 0; padding: 0; background: #336890; color: #fff; font: 15px/40px "Open Sans", sans-serif; }
.primary { background: #0078d7; border: 3px solid #0078d7; line-height: 32px; outline: 1px dotted #fff; outline-offset: -4px; }
.oobe-foot { height: 48px; flex: none; background: #1f1f1f; display: flex; align-items: center; padding: 2px 0 0 15px; }
.oobe-foot svg { fill: none; stroke: #fff; stroke-width: 1.300; }
.vm-status { height: 24px; flex: none; display: flex; align-items: center; padding: 1px 15px 0 4px; background: #f0f0f0; }
.vm-status > i { width: 1px; height: 18px; background: #a0a0a0; margin-left: 6px; }
.st-icons { margin-left: auto; display: flex; align-items: center; gap: 5px; margin-top: -1px; }

.taskbar { position: absolute; left: 0; top: 1032px; width: 1920px; height: 48px; background: #201f1e; border-top: 1px solid #434342; color: #f5f5f5; display: flex; align-items: center; padding-bottom: 1px; }
.weather { width: 677px; padding-left: 17px; display: flex; gap: 5px; align-items: center; margin-top: -2px; }
.weather text { font: 11px "Open Sans", sans-serif; fill: #fff; }
.weather > div, .clock { display: flex; flex-direction: column; align-items: flex-start; line-height: 16px; }
.dim { color: #cfcfcf; }
.apps { display: flex; gap: 4px; }
.app { position: relative; width: 40px; height: 40px; display: flex; align-items: center; justify-content: center; border-radius: 4px; }
.app.active { background: #2f2e2d; box-shadow: inset 0 0 0 1px #3a3938; }
.app.run::after { content: ""; position: absolute; bottom: 1px; left: 17px; width: 6px; height: 3px; border-radius: 2px; background: #9d9d9d; }
.app.active::after { left: 12px; width: 16px; background: #b5b5b5; }
.tray { margin-left: auto; margin-right: 20px; display: flex; align-items: center; margin-top: -1px; }
.tray svg { fill: none; stroke: #fff; stroke-width: 1.300; }
.chev { margin-right: 21px; }
.lang { margin-right: 19px; }
.tray .wifi circle, .tray .solid { fill: #fff; stroke: none; }
.tray .spk { margin: 0 7px; }
.tray .off { stroke: #666; }
.clock { margin-left: 16px; align-items: flex-end; }
</style>
